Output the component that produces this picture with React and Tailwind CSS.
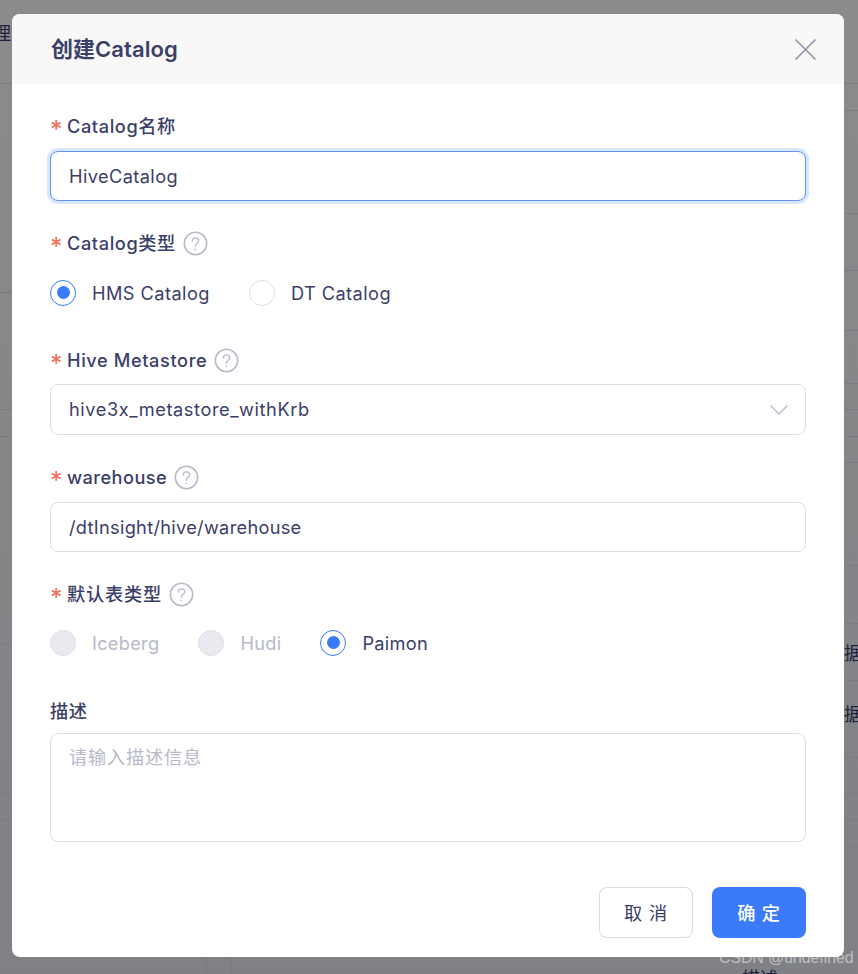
import React from 'react';

const font = "font-['Inter','Noto_Sans_CJK_SC',sans-serif]";

const leftRows = [84, 209, 117, 27, 208, 149, 26];
const rightRows = [84, 27, 103, 57, 60, 53, 26, 27, 26, 103, 58, 57, 42, 35, 36, 26, 27];

const HelpIcon = () => (
    <svg width="25" height="25" viewBox="0 0 25 25" fill="none" className="shrink-0 text-[#b9bbcd]">
        <circle cx="12.5" cy="12.5" r="11.2" stroke="currentColor" strokeWidth="1.6" />
        <path d="M9.3 10c0-1.9 1.4-3.1 3.2-3.1s3.2 1.2 3.2 2.9c0 1.3-.8 2-1.8 2.7-.9.6-1.4 1.2-1.4 2.3v.5" stroke="currentColor" strokeWidth="1.4" strokeLinecap="round" />
        <circle cx="12.2" cy="18.3" r="0.9" fill="currentColor" />
    </svg>
);

const Label = ({ text, required = true, help = false, className = 'tracking-[0.6px] mb-[12px]' }) => (
    <div className={`flex items-center h-[26px] text-[18.2px] font-medium text-[#3b4068] whitespace-nowrap ${className}`}>
        {required && <span className="w-[17px] pt-[7px] text-[24px] leading-[26px] text-[#f0735f] font-medium">*</span>}
        <span className="pt-[2px]">{text}</span>
        {help && <span className="ml-[7px] flex"><HelpIcon /></span>}
    </div>
);

const Radio = ({ label, checked = false, disabled = false, tracking = 'tracking-[0.45px]' }) => (
    <div className="flex items-center gap-[16px]">
        <span className={`w-[26px] h-[26px] rounded-full border flex items-center justify-center ${checked ? 'border-[#3b7bfa]' : 'border-[#dddee6]'} ${disabled ? 'bg-[#e9eaef]' : 'bg-white'}`}>
            {checked && <span className="w-[13px] h-[13px] rounded-full bg-[#3b7bfa]" />}
        </span>
        <span className={`pt-[2px] text-[18.2px] ${tracking} ${disabled ? 'text-[#b7b9c9]' : 'text-[#3b4068]'}`}>{label}</span>
    </div>
);

const Field = ({ children, focused = false, className = 'h-[50px]' }) => (
    <div className={`rounded-[8px] border bg-white flex items-center pl-[18px] pr-[17px] text-[18.2px] tracking-[0.4px] text-[#3b4068] ${focused ? 'border-[#5d94f5] shadow-[0_0_0_3px_#d9e6fe]' : 'border-[#dcdce5]'} ${className}`}>
        {children}
    </div>
);

const App = () => {
    return (
        <div className={`relative w-[858px] h-[974px] overflow-hidden bg-gradient-to-b from-[#8b8b8c] to-[#808185] ${font}`}>
            {/* table behind the overlay */}
            <div className="flex h-full text-[18px] text-[#1f2140]">
                <div className="w-[232px] flex flex-col">
                    {leftRows.map((h, i) => (
                        <div key={i} style={{ height: h }} className="shrink-0 border-b border-[#7b7c80] whitespace-nowrap">
                            {i === 0 && <div className="-ml-[7px] pt-[20px]">理</div>}
                        </div>
                    ))}
                    <div className="flex-1 min-h-0 flex border-r border-[#7b7c80]">
                        <div className="w-[207px] border-r border-[#7b7c80]" />
                    </div>
                </div>
                <div className="flex-1 flex flex-col">
                    {rightRows.map((h, i) => (
                        <div key={i} style={{ height: h }} className={`shrink-0 border-b border-[#7b7c80] flex justify-end whitespace-nowrap ${i === 12 ? 'items-start pt-[18px]' : 'items-center'}`}>
                            {(i === 11 || i === 12) && <div className="-mr-[4px] pt-[2px]">据</div>}
                        </div>
                    ))}
                    <div className="flex-1 min-h-0 overflow-hidden flex justify-between pl-[26px] pr-[80px] pt-[121px] leading-[22px]">
                        <div className="mt-[3px]">Catalog</div>
                        <div>描述</div>
                    </div>
                </div>
            </div>

            {/* modal */}
            <div className="absolute left-[12px] top-[14px] w-[832px] h-[943px] rounded-[8px] bg-white flex flex-col overflow-hidden">
                <div className="h-[70px] shrink-0 bg-[#f8f8f8] flex items-center justify-between pl-[39px] pr-[28px]">
                    <div className="pt-[1px] text-[22px] tracking-[0.05px] font-semibold text-[#3b4068]">创建Catalog</div>
                    <svg width="21" height="21" viewBox="0 0 21 21" fill="none" className="text-[#8f90a8]">
                        <path d="M0.5 0.5l20 20M20.5 0.5l-20 20" stroke="currentColor" strokeWidth="1.5" />
                    </svg>
                </div>

                <div className="flex-1 flex flex-col pl-[38px] pr-[38px] pt-[29px]">
                    <Label text="Catalog名称" />
                    <Field focused className="h-[50px] mb-[29px]"><span className="pt-[2px]">HiveCatalog</span></Field>

                    <Label text="Catalog类型" help />
                    <div className="flex items-center gap-[39px] h-[50px] mb-[29px]">
                        <Radio label="HMS Catalog" checked />
                        <Radio label="DT Catalog" />
                    </div>

                    <Label text="Hive Metastore" help className="tracking-[0.6px] mb-[11px]" />
                    <Field className="h-[51px] justify-between mb-[29px]">
                        <span className="pt-[1px] tracking-[0.58px]">hive3x_metastore_withKrb</span>
                        <svg width="18" height="10" viewBox="0 0 18 10" fill="none" className="text-[#b9bbcd]">
                            <path d="M0.5 0.5L9 9l8.5-8.5" stroke="currentColor" strokeWidth="1.4" />
                        </svg>
                    </Field>

                    <Label text="warehouse" help className="tracking-[0.45px] mb-[12px]" />
                    <Field className="h-[50px] mb-[29px]"><span className="pt-[2px] tracking-[0.3px]">/dtInsight/hive/warehouse</span></Field>

                    <Label text="默认表类型" help className="tracking-[0.8px] mb-[12px]" />
                    <div className="flex items-center gap-[39px] h-[48px] mb-[31px]">
                        <Radio label="Iceberg" disabled tracking="tracking-[0.3px]" />
                        <Radio label="Hudi" disabled tracking="tracking-[0.3px]" />
                        <Radio label="Paimon" checked tracking="tracking-[0.3px]" />
                    </div>

                    <div className="flex items-center h-[26px] mb-[9px] pt-[2px] text-[18.2px] tracking-[0.6px] font-medium text-[#3b4068]">描述</div>
                    <div className="h-[109px] rounded-[8px] border border-[#dcdce5] pl-[18px] pt-[10px] text-[18.2px] tracking-[0.8px] text-[#b7b9c9]">请输入描述信息</div>

                    <div className="flex justify-end gap-[19px] mt-[45px]">
                        <div className="w-[94px] h-[51px] pt-[2px] rounded-[8px] border border-[#d9dae5] flex items-center justify-center text-[18.2px] tracking-[0.8px] text-[#3b4068]">取 消</div>
                        <div className="w-[94px] h-[51px] pt-[2px] rounded-[8px] bg-[#3b7afb] flex items-center justify-center text-[18.2px] tracking-[0.8px] font-medium text-white">确 定</div>
                    </div>
                </div>
            </div>

            {/* watermark */}
            <div className="absolute left-[719px] top-[948px] font-['Liberation_Sans',sans-serif] text-[15.8px] leading-[20px] text-white/50 whitespace-nowrap">CSDN @undefined</div>
        </div>
    );
};

export default App;
